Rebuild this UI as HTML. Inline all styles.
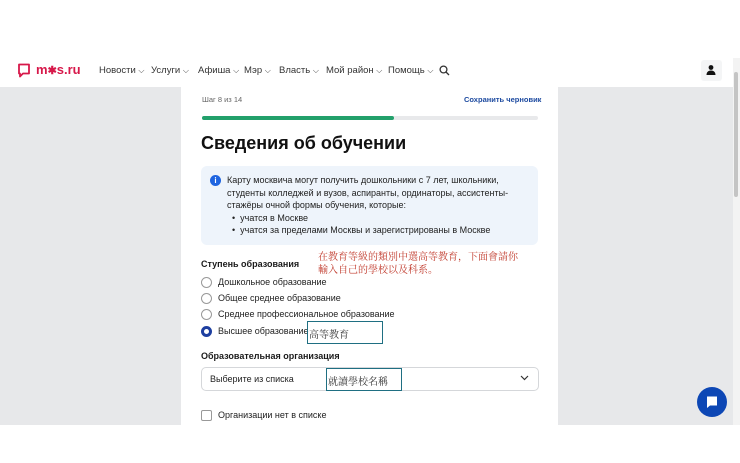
<!DOCTYPE html>
<html><head><meta charset="utf-8"><style>
*{margin:0;padding:0;box-sizing:border-box}
body{width:740px;height:463px;background:#fff;font-family:"Liberation Sans","Noto Sans CJK TC",sans-serif;position:relative;overflow:hidden;color:#1a1a1a}
.abs{position:absolute}
.nav{top:65px;font-size:9.5px;color:#333;white-space:nowrap}
.nav i{font-style:normal;font-size:8px;color:#444}
.gray{left:0;top:87px;width:733px;height:338px;background:#e7e8ea}
.card{left:181px;top:87px;width:377px;height:338px;background:#fff}
.t{font-size:9px;color:#222}
.radio{width:11px;height:11px;border:1px solid #999;border-radius:50%;left:201px}
.cjk{font-family:"Noto Serif CJK SC","Noto Sans CJK TC",serif}
</style></head><body>
<svg class="abs" style="left:17px;top:63px" width="14" height="15" viewBox="0 0 14 15"><path d="M2 1.5h10v9H6l-3 3v-3H2z" fill="none" stroke="#d7184a" stroke-width="1.8" stroke-linejoin="round"/></svg>
<div class="abs" style="left:36px;top:62px;font-size:13px;font-weight:bold;color:#d7184a">m<span style="font-size:11px">✱</span>s.ru</div>
<div class="abs nav" style="left:99px">Новости <i>⌵</i></div>
<div class="abs nav" style="left:151px">Услуги <i>⌵</i></div>
<div class="abs nav" style="left:198px">Афиша <i>⌵</i></div>
<div class="abs nav" style="left:244px">Мэр <i>⌵</i></div>
<div class="abs nav" style="left:279px">Власть <i>⌵</i></div>
<div class="abs nav" style="left:326px">Мой район <i>⌵</i></div>
<div class="abs nav" style="left:388px">Помощь <i>⌵</i></div>
<svg class="abs" style="left:439px;top:65px" width="11" height="11" viewBox="0 0 11 11"><circle cx="4.5" cy="4.5" r="3.4" fill="none" stroke="#333" stroke-width="1.3"/><path d="M7 7l3 3" stroke="#333" stroke-width="1.3"/></svg>
<div class="abs" style="left:701px;top:60px;width:21px;height:21px;background:#f4f5f6;border-radius:3px"></div>
<svg class="abs" style="left:705px;top:64px" width="12" height="12" viewBox="0 0 12 12"><circle cx="6" cy="3.5" r="2.4" fill="#111"/><path d="M1.5 11c0-3 2-4.5 4.5-4.5s4.5 1.5 4.5 4.5z" fill="#111"/></svg>
<div class="abs gray"></div>
<div class="abs" style="left:733px;top:58px;width:7px;height:367px;background:#f3f3f3"></div>
<div class="abs" style="left:734px;top:72px;width:4px;height:125px;background:#c4c4c4;border-radius:2px"></div>
<div class="abs card"></div>
<div class="abs" style="left:202px;top:95px;font-size:7.5px;color:#666">Шаг 8 из 14</div>
<div class="abs" style="left:464px;top:95px;font-size:7.5px;color:#1e4ba0;font-weight:bold">Сохранить черновик</div>
<div class="abs" style="left:202px;top:116px;width:336px;height:4px;background:#e8e9eb;border-radius:2px"></div>
<div class="abs" style="left:202px;top:116px;width:192px;height:4px;background:#22a06b;border-radius:2px"></div>
<div class="abs" style="left:201px;top:133px;font-size:18px;font-weight:bold;color:#111">Сведения об обучении</div>
<div class="abs" style="left:201px;top:166px;width:337px;height:79px;background:#eef4fb;border-radius:6px"></div>
<div class="abs" style="left:210px;top:175px;width:11px;height:11px;border-radius:50%;background:#1e64e0;color:#fff;font-size:8px;font-weight:bold;text-align:center;line-height:11px">i</div>
<div class="abs t" style="left:227px;top:174px;line-height:12.5px;width:285px">Карту москвича могут получить дошкольники с 7 лет, школьники, студенты колледжей и вузов, аспиранты, ординаторы, ассистенты-стажёры очной формы обучения, которые:<br>&nbsp;&nbsp;•&nbsp; учатся в Москве<br>&nbsp;&nbsp;•&nbsp; учатся за пределами Москвы и зарегистрированы в Москве</div>
<div class="abs cjk" style="left:318px;top:249px;font-size:10px;line-height:13px;color:#c0392b">在教育等級的類別中選高等教育，下面會請你<br>輸入自己的學校以及科系。</div>
<div class="abs" style="left:201px;top:259px;font-size:9px;font-weight:bold">Ступень образования</div>
<div class="abs radio" style="top:277px"></div><div class="abs t" style="left:218px;top:277px">Дошкольное образование</div>
<div class="abs radio" style="top:293px"></div><div class="abs t" style="left:218px;top:293px">Общее среднее образование</div>
<div class="abs radio" style="top:309px"></div><div class="abs t" style="left:218px;top:309px">Среднее профессиональное образование</div>
<div class="abs radio" style="top:326px;border:3px solid #1e3fa0"></div><div class="abs t" style="left:218px;top:326px">Высшее образование</div>
<div class="abs cjk" style="left:307px;top:321px;width:76px;height:23px;border:1.5px solid #1f6f82;font-size:10px;padding:4px 1px;color:#333">高等教育</div>
<div class="abs" style="left:201px;top:351px;font-size:9px;font-weight:bold">Образовательная организация</div>
<div class="abs" style="left:201px;top:367px;width:338px;height:24px;border:1px solid #d5d7da;border-radius:5px"></div>
<div class="abs t" style="left:210px;top:374px">Выберите из списка</div>
<div class="abs cjk" style="left:326px;top:368px;width:76px;height:23px;border:1.5px solid #1f6f82;font-size:10px;padding:4px 1px;color:#333">就讀學校名稱</div>
<svg class="abs" style="left:520px;top:375px" width="9" height="6" viewBox="0 0 9 6"><path d="M1 1l3.5 3.5L8 1" fill="none" stroke="#333" stroke-width="1.2"/></svg>
<div class="abs" style="left:201px;top:410px;width:11px;height:11px;border:1px solid #999;border-radius:2px"></div>
<div class="abs t" style="left:218px;top:410px">Организации нет в списке</div>
<div class="abs" style="left:697px;top:387px;width:30px;height:30px;border-radius:50%;background:#0d47b5"></div>
<svg class="abs" style="left:704px;top:394px" width="16" height="16" viewBox="0 0 16 16"><path d="M3 2.5h10v9H6l-3 2.5z" fill="#fff"/></svg>
</body></html>
